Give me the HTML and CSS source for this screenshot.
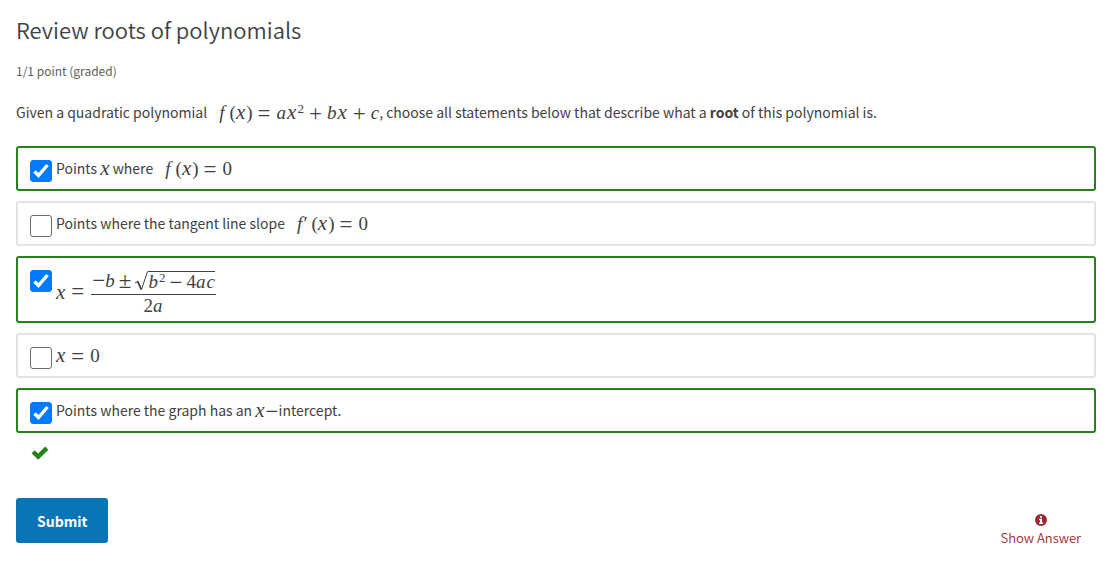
FILE: index.html
```html
<!DOCTYPE html>
<html lang="en">
<head>
<meta charset="utf-8">
<meta name="viewport" content="width=device-width, initial-scale=1">
<title>Review roots of polynomials</title>
<link rel="stylesheet" href="styles.css">
</head>
<body>
<main class="problem">
  <h1 class="problem-title">Review roots of polynomials</h1>
  <p class="progress">1/1 point (graded)</p>
  <form class="problem-form">
    <p class="prompt">Given a quadratic polynomial <span class="math fn"><i class="f">f</i>(<i class="x">x</i>)<span class="op rel">=</span><i>a</i><i class="x">x</i><sup>2</sup><span class="op">+</span><i>b</i><i class="x">x</i><span class="op">+</span><i class="last">c</i></span>, choose all statements below that describe what a <strong>root</strong> of this polynomial is.</p>

    <div class="choices">
      <label class="choice correct">
        <input class="box" type="checkbox" checked>
        <span class="choice-text">Points <span class="math"><i class="x last">x</i></span> where <span class="math fn"><i class="f">f</i>(<i class="x">x</i>)<span class="op rel">=</span>0</span></span>
      </label>
      <label class="choice">
        <input class="box" type="checkbox">
        <span class="choice-text">Points where the tangent line slope <span class="math fn"><i>f</i><span class="prime">′</span>(<i class="x">x</i>)<span class="op rel">=</span>0</span></span>
      </label>
      <label class="choice correct">
        <input class="box" type="checkbox" checked>
        <span class="math formula"><i class="x">x</i><span class="op rel">=</span><span class="frac"><span class="num"><span class="sign">−</span><i>b</i><span class="op pm">±</span><svg class="radical" viewBox="0 0 14 20" aria-hidden="true"><path d="M1 12 L4 10 L7.500 18.500 L13.500 .5" fill="none" stroke="currentColor" stroke-width="1"/><path d="M3.500 10.500 L7.200 18.500" fill="none" stroke="currentColor" stroke-width="1.600"/></svg><span class="radicand"><i>b</i><sup>2</sup><span class="op">−</span>4<i>a</i><i class="last">c</i></span></span><span class="den">2<i>a</i></span></span></span>
      </label>
      <label class="choice">
        <input class="box" type="checkbox">
        <span class="choice-text"><span class="math"><i class="x">x</i><span class="op rel">=</span>0</span></span>
      </label>
      <label class="choice correct">
        <input class="box" type="checkbox" checked>
        <span class="choice-text">Points where the graph has an <span class="math"><i class="x">x</i><span class="sign">−</span></span>intercept.</span>
      </label>
    </div>

    <div class="status" role="img" aria-label="Correct">
      <svg class="status-icon" viewBox="0 0 18 14"><path d="M3.600 4.200 L7.200 7.600 L14.200 .6 L17.400 3.800 L7.200 13.800 L.6 7.200 Z" fill="currentColor"/></svg>
    </div>

    <div class="actions">
      <button class="submit" type="button">Submit</button>
      <button class="show-answer" type="button">
        <svg class="info-icon" viewBox="0 0 12 12" aria-hidden="true"><circle cx="6" cy="6" r="6" fill="currentColor"/><path d="M5 2h2v1.800H5zM4.200 4.800H7v3.700h.9V10H4.200V8.500H5V6.200h-.8z" fill="#fff"/></svg>
        <span>Show Answer</span>
      </button>
    </div>
  </form>
</main>
</body>
</html>
```
FILE: styles.css
```css
* { box-sizing: border-box; }

body {
  margin: 0;
  background: #fff;
  color: #414141;
  font-family: "Noto Sans CJK SC", "Open Sans", sans-serif;
  font-size: 14px;
  line-height: 24px;
}

.problem { padding: 14px 15px 18px 16px; }

.problem-title {
  margin: 0 0 15px;
  font-size: 22px;
  font-weight: 350;
  line-height: 30px;
}

.progress {
  margin: 0 0 17px;
  color: #5e5e5e;
  font-size: 12px;
  line-height: 24px;
}

.prompt { margin: 0 0 22px; }

.math {
  font-family: "Liberation Serif", serif;
  font-size: 19px;
  line-height: 20px;
  vertical-align: -1px;
  white-space: nowrap;
}
.math i { padding-right: 1px; }
.math .x {
  font-size: 21px;
  line-height: 0;
}
.math .last { padding-right: 0; }
.math sup {
  font-size: 13px;
  line-height: 0;
  vertical-align: 6px;
}
.fn { padding-left: 9px; }
.math .f { padding-right: 5px; }
.prime { padding-right: 4px; }
.op, .sign {
  font-size: 23px;
  line-height: 0;
  vertical-align: -2px;
}
.op { margin: 0 5px; }
.rel { margin: 0 6px 0 5px; }
.num .op { margin: 0 4px; }
.num .pm { margin: 0 3px; }

.choices {
  display: flex;
  flex-direction: column;
  gap: 10px;
}

.choice {
  display: flex;
  align-items: flex-start;
  gap: 4px;
  min-height: 45px;
  padding: 8px 12px 4px;
  border: 2px solid #e3e3e3;
  border-radius: 3px;
}
.choice.correct { border-color: #26821b; }

.box {
  appearance: none;
  flex: none;
  width: 22px;
  height: 22px;
  margin: 4px 0 0;
  border: 1px solid #6b6b6b;
  border-radius: 3px;
  background: #fff;
}
.box:checked {
  border-color: #007bff;
  background: #007bff url("data:image/svg+xml,%3Csvg xmlns='http://www.w3.org/2000/svg' viewBox='0 0 20 20'%3E%3Cpath d='M3.500 10.500 7.500 14.500 16.500 4' fill='none' stroke='white' stroke-width='3.400'/%3E%3C/svg%3E") center / 20px 20px no-repeat;
}

.formula {
  display: flex;
  align-items: center;
}
.frac {
  display: flex;
  flex-direction: column;
  align-items: center;
  margin-left: 1px;
}
.num {
  display: flex;
  align-items: center;
  height: 29px;
  padding: 2px 1px 0;
  border-bottom: 1px solid #414141;
}
.den { line-height: 22px; }
.radical { width: 14px; height: 20px; }
.radicand {
  height: 20px;
  border-top: 1px solid #414141;
}

.status {
  display: flex;
  padding: 13px 15px 16px;
  color: #26821b;
}
.status-icon { width: 18px; height: 14px; }

.actions {
  display: flex;
  justify-content: space-between;
  align-items: flex-start;
  margin-top: 22px;
}

.submit, .show-answer {
  border: 0;
  font-family: inherit;
  cursor: pointer;
}
.submit {
  height: 45px;
  padding: 0 21px;
  border-radius: 3px;
  background: #0875b5;
  color: #fff;
  font-size: 14px;
  font-weight: 700;
}
.show-answer {
  display: flex;
  flex-direction: column;
  align-items: center;
  gap: 3px;
  padding: 16px 15px 0;
  background: none;
  color: #9b2a31;
  font-size: 13px;
  font-weight: 350;
  line-height: 18px;
}
.info-icon { width: 12px; height: 12px; }
```
